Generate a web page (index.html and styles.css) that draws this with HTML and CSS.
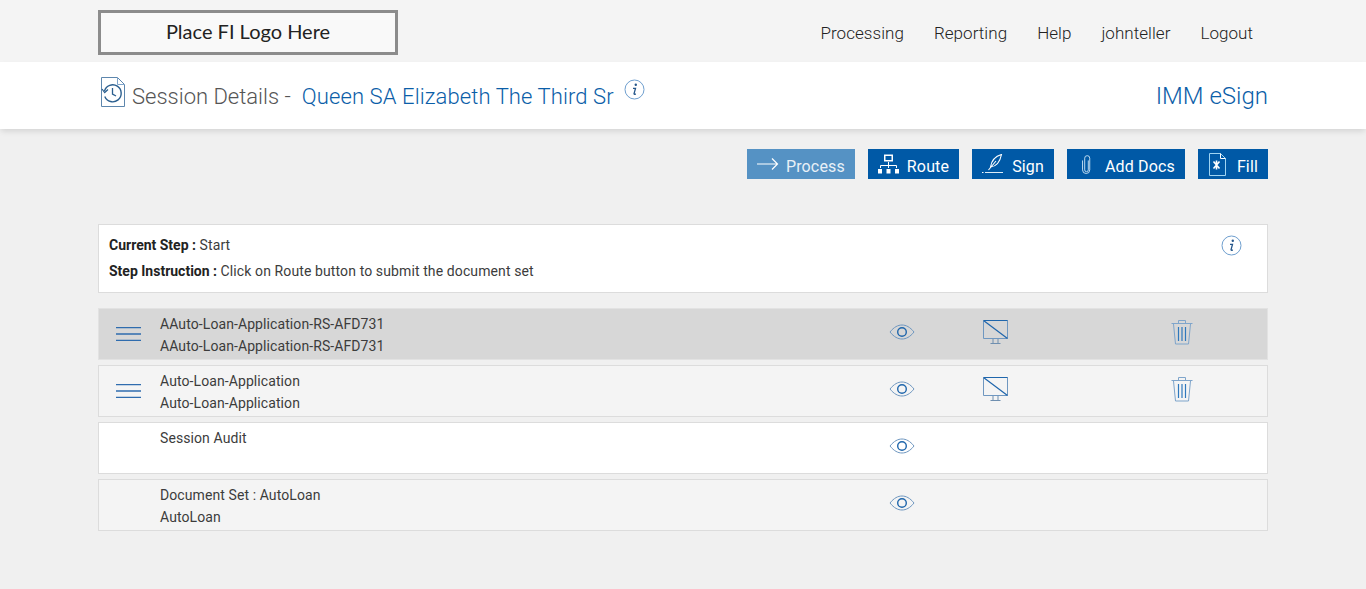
FILE: index.html
```html
<!DOCTYPE html>
<html lang="en">
<head>
  <meta charset="UTF-8" />
  <meta name="viewport" content="width=device-width, initial-scale=1.0" />
  <title>Session Details</title>
  <link rel="stylesheet" href="styles.css">
</head>
<body>

  <!-- shared icons -->
  <svg class="icon-defs" aria-hidden="true">
    <symbol id="i-eye" viewBox="0 0 26 16">
      <path d="M1 8C5 3 9 1 13 1s8 2 12 7c-4 5-8 7-12 7S5 13 1 8z" fill="none" stroke="#6f97c0" stroke-width="1"/>
      <circle cx="13" cy="8" r="4.3" fill="none" stroke="#1f66ac" stroke-width="1.4"/>
    </symbol>
    <symbol id="i-monitor" viewBox="0 0 25 24">
      <path d="M.5 .5h24v18H.5z" fill="none" stroke="#6f97c0" stroke-width="1"/>
      <path d="M.5 .5h24M.5 .5l24 18" fill="none" stroke="#1f66ac" stroke-width="1.2"/>
      <path d="M10 19v4M15 19v4M7.500 23.500h10" fill="none" stroke="#6f8fb0" stroke-width="1"/>
    </symbol>
    <symbol id="i-trash" viewBox="0 0 22 26">
      <path d="M.5 4.500h21M7.500 4V1.500h7V4" fill="none" stroke="#7fa5cb" stroke-width="1"/>
      <path d="M2.500 5l2 20h13l2-20" fill="none" stroke="#7fa5cb" stroke-width="1"/>
      <path d="M7.500 8v14M11 8v14M14.500 8v14" fill="none" stroke="#2f78bd" stroke-width="1.200"/>
    </symbol>
    <symbol id="i-info" viewBox="0 0 21 21">
      <circle cx="10.500" cy="10.500" r="9.500" fill="#fff" stroke="#6f9fcf" stroke-width="1"/>
      <circle cx="11.800" cy="5.800" r="1.200" fill="#25568a"/>
      <path d="M9 9.300h2.500l-1.500 5.500c0 .6.600.6 1.800 0" fill="none" stroke="#25568a" stroke-width="1.300"/>
    </symbol>
    <symbol id="i-handle" viewBox="0 0 25 14">
      <path d="M0 .7h25M0 7h25M0 13.300h25" fill="none" stroke="#2f6cae" stroke-width="1.300"/>
    </symbol>
  </svg>

  <header class="topbar">
    <div class="contenedor topbar-fila">
      <div class="logo">Place FI Logo Here</div>
      <nav class="menu">
        <a>Processing</a>
        <a>Reporting</a>
        <a>Help</a>
        <a>johnteller</a>
        <a>Logout</a>
      </nav>
    </div>
  </header>

  <section class="subheader">
    <div class="contenedor subheader-fila">
      <svg class="icono-sesion" viewBox="0 0 24 30" aria-hidden="true">
        <path d="M.5 .5h16l7 7v22H.5z" fill="none" stroke="#5d86ad" stroke-width="1"/>
        <path d="M16.500 .5v7h7" fill="none" stroke="#7fa5cb" stroke-width="1"/>
        <path d="M3.500 14a8.500 8.500 0 1 1 .3 5.500" fill="none" stroke="#2b5f8f" stroke-width="1.400"/>
        <path d="M1 12l2.700 3.500L7 12.500" fill="none" stroke="#2b5f8f" stroke-width="1.200"/>
        <path d="M11.500 11v6l3.500 2" fill="none" stroke="#2b5f8f" stroke-width="1.300"/>
      </svg>
      <h1 class="titulo">Session Details -<span class="titulo-nombre">Queen SA Elizabeth The Third Sr</span></h1>
      <svg class="icono-info info-titulo"><use href="#i-info"/></svg>
      <div class="producto">IMM eSign</div>
    </div>
  </section>

  <main class="contenedor">
    <div class="acciones">
      <button class="btn btn-inactivo">
        <svg class="btn-icono" width="22" height="14" viewBox="0 0 22 14"><path d="M0 7h20.500M15 1.500L20.500 7 15 12.500" fill="none" stroke="#fff" stroke-width="1.200"/></svg>
        Process
      </button>
      <button class="btn">
        <svg class="btn-icono" width="21" height="20" viewBox="0 0 21 20"><path d="M6 .5h9v7H6z" fill="#fff"/><path d="M7.500 2h6v4h-6z" fill="#0059a6"/><path d="M10.500 8v6M2.500 14v-2.500h16V14" fill="none" stroke="#fff" stroke-width="1"/><path d="M0 15h4v4.500H0zM8.500 15h4v4.500h-4zM17 15h4v4.500h-4z" fill="#fff"/></svg>
        Route
      </button>
      <button class="btn btn-sign">
        <svg class="btn-icono" width="21" height="20" viewBox="0 0 21 20"><path d="M19.500 .5C14 2 9.500 6.500 8.500 13c5.500-.5 9.500-5 11-12.500zM6.500 16L14 7" fill="none" stroke="#fff" stroke-width="1.100"/><path d="M3 18.500h18" stroke="#dcecf8" stroke-width="1"/><path d="M0 18.500h1.500" stroke="#fff" stroke-width="1"/></svg>
        Sign
      </button>
      <button class="btn btn-clip">
        <svg class="btn-icono" width="9" height="21" viewBox="0 0 10 21"><path d="M7 6v10.500a2 2 0 0 1-4 0V3.500a2.800 2.800 0 0 1 5.600 0v13a4 4 0 0 1-8 0V6" fill="none" stroke="#cfe6f7" stroke-width="1"/></svg>
        Add Docs
      </button>
      <button class="btn btn-fill">
        <svg class="btn-icono" width="17" height="23" viewBox="0 0 17 23"><path d="M.5 .5h11l5 5v17H.5z" fill="none" stroke="#9fd4f2" stroke-width="1"/><path d="M11.500 .5v5h5" fill="none" stroke="#fff" stroke-width="1"/><path d="M4.500 8.500l6 7M10.500 8.500l-6 7M7.500 7.500v9" fill="none" stroke="#fff" stroke-width="1.600"/></svg>
        Fill
      </button>
    </div>

    <div class="paso">
      <div class="paso-texto">
        <p><b>Current Step :</b> Start</p>
        <p><b>Step Instruction :</b> Click on Route button to submit the document set</p>
      </div>
      <svg class="icono-info info-paso"><use href="#i-info"/></svg>
    </div>

    <div class="lista">
      <div class="fila fila-activa">
        <div class="col-asa"><svg class="asa"><use href="#i-handle"/></svg></div>
        <div class="col-texto">AAuto-Loan-Application-RS-AFD731<br>AAuto-Loan-Application-RS-AFD731</div>
        <div class="col-ver"><svg class="ojo"><use href="#i-eye"/></svg></div>
        <div class="col-monitor"><svg class="monitor"><use href="#i-monitor"/></svg></div>
        <div class="col-borrar"><svg class="papelera"><use href="#i-trash"/></svg></div>
      </div>
      <div class="fila fila-gris">
        <div class="col-asa"><svg class="asa"><use href="#i-handle"/></svg></div>
        <div class="col-texto">Auto-Loan-Application<br>Auto-Loan-Application</div>
        <div class="col-ver"><svg class="ojo"><use href="#i-eye"/></svg></div>
        <div class="col-monitor"><svg class="monitor"><use href="#i-monitor"/></svg></div>
        <div class="col-borrar"><svg class="papelera"><use href="#i-trash"/></svg></div>
      </div>
      <div class="fila">
        <div class="col-asa"></div>
        <div class="col-texto">Session Audit</div>
        <div class="col-ver"><svg class="ojo"><use href="#i-eye"/></svg></div>
      </div>
      <div class="fila fila-gris">
        <div class="col-asa"></div>
        <div class="col-texto">Document Set : AutoLoan<br>AutoLoan</div>
        <div class="col-ver"><svg class="ojo"><use href="#i-eye"/></svg></div>
      </div>
    </div>
  </main>

</body>
</html>
```

FILE: styles.css
```css
* {
  box-sizing: border-box;
}

html,
body {
  height: 100%;
}

body {
  margin: 0;
  background-color: #f0f0f0;
  font-family: Roboto, "Liberation Sans", sans-serif;
  font-size: 14px;
  letter-spacing: 0.09px;
  color: #3c3c3c;
  overflow: hidden;
}

.icon-defs {
  display: none;
}

.contenedor {
  width: 1170px;
  margin: 0 auto;
}

.topbar {
  height: 62px;
  background-color: #f4f4f4;
}

.topbar-fila {
  display: flex;
  justify-content: space-between;
  padding-top: 10px;
}

.logo {
  width: 300px;
  height: 45px;
  border: 3px solid #8c8c8c;
  background-color: #f9f9f9;
  font-family: Lato, sans-serif;
  font-size: 20px;
  letter-spacing: 0;
  line-height: 36px;
  text-align: center;
  color: #222;
}

.menu {
  display: flex;
  gap: 30px;
  padding: 12px 15px 0 0;
  font-size: 17px;
  font-weight: 300;
  letter-spacing: 0.05px;
  line-height: 22px;
  color: #222;
}

.subheader {
  height: 67px;
  background-color: #fff;
  box-shadow: 0 3px 6px -1px rgba(0,0,0,0.13);
}

.subheader-fila {
  display: flex;
  align-items: flex-start;
  padding-top: 15px;
}

.icono-sesion {
  width: 24px;
  height: 30px;
  margin-left: 3px;
}

.titulo {
  margin: 5px 0 0 7px;
  font-size: 22px;
  font-weight: 300;
  letter-spacing: 0;
  line-height: 30px;
  color: #555;
}

.titulo-nombre {
  margin-left: 11px;
  letter-spacing: 0.1px;
}

.titulo-nombre,
.producto {
  color: #0b5ea8;
}

.icono-info {
  width: 21px;
  height: 21px;
}

.info-titulo {
  margin: 2px 0 0 10px;
}

.producto {
  margin: 4px 0 0 auto;
  font-size: 24px;
  font-weight: 300;
  letter-spacing: 0;
  line-height: 30px;
}

.acciones {
  display: flex;
  justify-content: flex-end;
  gap: 13px;
  margin-top: 20px;
}

.btn {
  display: flex;
  align-items: center;
  height: 30px;
  padding: 4px 10px 0;
  border: none;
  background-color: #0059a6;
  font-family: inherit;
  font-size: 16px;
  letter-spacing: 0.15px;
  color: white;
  cursor: pointer;
}

.btn-icono {
  margin: -4px 8px 0 0;
}

.btn-sign .btn-icono {
  margin-right: 9px;
}

.btn-clip {
  padding-left: 15px;
}

.btn-clip .btn-icono {
  margin-right: 14px;
}

.btn-fill {
  padding-left: 11px;
}

.btn-fill .btn-icono {
  margin-right: 11px;
}

.btn-inactivo {
  background-color: #5592c4;
  color: #e8f0f7;
}

.btn-inactivo .btn-icono {
  margin-right: 7px;
}

.paso {
  display: flex;
  justify-content: space-between;
  height: 69px;
  margin-top: 45px;
  padding: 11px 25px 0 10px;
  background-color: #fff;
  border: 1px solid #dcdcdc;
}

.paso-texto p {
  margin: 0 0 8px;
  letter-spacing: 0.11px;
  line-height: 18px;
}

.paso-texto b {
  font-weight: 700;
  letter-spacing: 0;
  color: #222;
}

.info-paso {
  margin-top: -1px;
}

.lista {
  display: flex;
  flex-direction: column;
  gap: 5px;
  margin-top: 15px;
}

.fila {
  display: flex;
  height: 52px;
  background-color: #fff;
  border: 1px solid #dcdcdc;
}

.fila-activa {
  background-color: #d7d7d7;
  border-color: #e2e2e2;
}

.fila-gris {
  background-color: #f4f4f4;
}

.col-asa {
  width: 61px;
  padding: 18px 0 0 17px;
}

.col-texto {
  width: 729px;
  padding-top: 4px;
  line-height: 22px;
}

.col-ver {
  width: 94px;
  padding-top: 15px;
}

.col-monitor {
  width: 188px;
  padding-top: 11px;
}

.col-borrar {
  padding-top: 10px;
}

.asa {
  display: block;
  width: 25px;
  height: 14px;
}

.ojo {
  display: block;
  width: 26px;
  height: 16px;
}

.monitor {
  display: block;
  width: 25px;
  height: 24px;
}

.papelera {
  display: block;
  width: 22px;
  height: 26px;
}
```
